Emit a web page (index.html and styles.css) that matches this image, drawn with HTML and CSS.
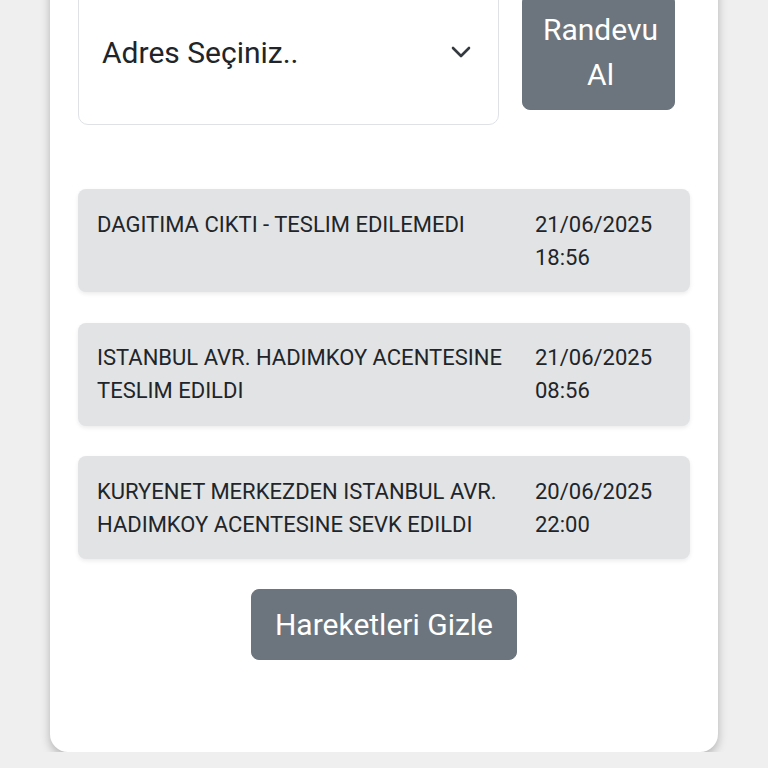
FILE: index.html
```html
<!DOCTYPE html>
<html lang="tr">
<head>
<meta charset="utf-8">
<title>Kargo Takip</title>
<link rel="stylesheet" href="styles.css">
</head>
<body>
<div class="card">
  <div class="top">
    <div class="select">
      <span>Adres Seçiniz..</span>
      <svg class="chev" width="20" height="12" viewBox="0 0 20 12" aria-hidden="true"><path d="M2 2 L10 10 L18 2" fill="none" stroke="#343a40" stroke-width="2.6" stroke-linecap="round" stroke-linejoin="round"/></svg>
    </div>
    <button class="btn btn-rdv">Randevu Al</button>
  </div>
  <div class="list">
    <div class="item">
      <div class="desc">DAGITIMA CIKTI - TESLIM EDILEMEDI</div>
      <div class="date">21/06/2025<br>18:56</div>
    </div>
    <div class="item">
      <div class="desc">ISTANBUL AVR. HADIMKOY ACENTESINE TESLIM EDILDI</div>
      <div class="date">21/06/2025<br>08:56</div>
    </div>
    <div class="item">
      <div class="desc">KURYENET MERKEZDEN ISTANBUL AVR. HADIMKOY ACENTESINE SEVK EDILDI</div>
      <div class="date">20/06/2025<br>22:00</div>
    </div>
  </div>
  <div class="actions">
    <button class="btn btn-hide">Hareketleri Gizle</button>
  </div>
</div>
</body>
</html>
```
FILE: styles.css
```css
* { box-sizing: border-box; }
html, body { margin: 0; padding: 0; }
body {
  background: #efefef;
  font-family: Roboto, "Noto Sans", "Liberation Sans", sans-serif;
  color: #212529;
  overflow: hidden;
}
.card {
  margin: -49px 0 0 50px;
  width: 668px;
  padding: 28px 28px 92px;
  background: #fff;
  border-radius: 18px;
  box-shadow: 0 4px 10px rgba(0,0,0,0.25);
}
.top {
  display: flex;
  align-items: center;
  gap: 23px;
}
.select {
  width: 421px;
  height: 146px;
  border: 1px solid #dee2e6;
  border-radius: 10px;
  display: flex;
  align-items: center;
  justify-content: space-between;
  padding: 0 27px 0 23px;
  font-size: 30px;
  line-height: 45px;
  color: #212529;
}
.chev { display: block; }
.btn {
  font-family: inherit;
  font-size: 30px;
  line-height: 45px;
  color: #fff;
  background: #6c757d;
  border: 1px solid #6c757d;
  border-radius: 8px;
  padding: 12px 23px;
  cursor: pointer;
}
.btn-rdv {
  width: 153px;
  padding: 12px 10px 12px 14px;
  text-align: center;
}
.list {
  margin-top: 64px;
  display: flex;
  flex-direction: column;
  gap: 30.5px;
}
.item {
  display: flex;
  gap: 10px;
  background: #e2e3e5;
  border-radius: 8px;
  padding: 18.5px 0 18.5px 19px;
  font-size: 22px;
  line-height: 33px;
  color: #212529;
  box-shadow: 0 2px 4px rgba(0,0,0,0.08);
}
.desc { flex: 1; }
.date { width: 155px; flex: none; }
.actions {
  margin-top: 30px;
  text-align: center;
}
```
